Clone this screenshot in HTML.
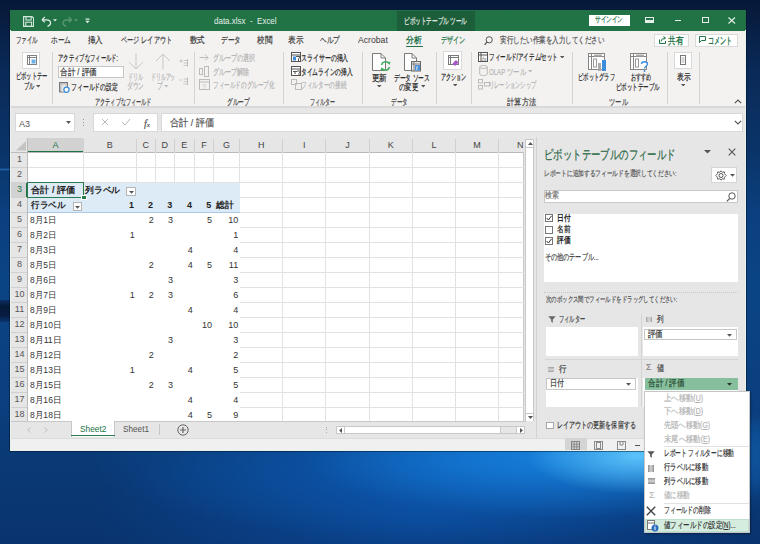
<!DOCTYPE html>
<html><head><meta charset="utf-8"><style>
html,body{margin:0;padding:0;width:760px;height:544px;overflow:hidden;}
body{position:relative;font-family:"Liberation Sans",sans-serif;background:#0a2d63;}
#d{position:absolute;left:0;top:0;width:760px;height:544px;overflow:hidden;}
#d div{position:absolute;white-space:nowrap;-webkit-text-stroke:0.2px currentColor;}
</style></head><body><div id="d">
<div style="left:0;top:0;width:760px;height:544px;background:radial-gradient(ellipse 110px 38px at 638px 456px, rgba(95,200,255,.95), rgba(95,200,255,0) 100%),radial-gradient(ellipse 260px 62px at 565px 456px, rgba(25,140,232,.8), rgba(25,140,232,0) 100%),radial-gradient(ellipse 380px 80px at 470px 462px, rgba(12,100,198,.75), rgba(12,100,198,0) 100%),radial-gradient(ellipse 330px 90px at 420px 515px, rgba(12,80,165,.7), rgba(12,80,165,0) 100%),linear-gradient(to bottom, #061838 0px, #0a2a58 70px, #0a3468 150px, #0b4080 220px, #0b4484 290px, #0b3f7e 400px, #0a3a76 455px, #09336e 544px);"></div>
<div style="left:0.00px;top:300.00px;width:10.00px;height:22.00px;background:linear-gradient(to bottom, #0a2d60, #061a3a 30%, #071d40 70%, #0a3570);"></div>
<div style="left:0.00px;top:168.00px;width:10.00px;height:3.00px;background:linear-gradient(to bottom, rgba(40,110,190,0), rgba(40,110,190,.8), rgba(40,110,190,0));"></div>
<div style="left:10.00px;top:10.00px;width:736.00px;height:441.00px;background:#f3f2f1;"></div>
<div style="left:10.00px;top:10.00px;width:736.00px;height:21.00px;background:#217346;"></div>
<div style="left:397.00px;top:11.00px;width:78.00px;height:20.00px;background:#1b5e39;"></div>
<div style="left:403.70px;top:15.67px;line-height:11.05px;font-size:8.5px;color:#e6efe9;transform:scaleX(0.6224);transform-origin:0 50%;--w:63.10px;">ピボットテーブル ツール</div>
<div style="left:214.20px;top:15.75px;line-height:11.7px;font-size:9px;color:#e6efe9;transform:scaleX(0.8875);transform-origin:0 50%;--w:62.60px;-webkit-text-stroke:0;">data.xlsx&nbsp;&nbsp;-&nbsp;&nbsp;Excel</div>
<div style="left:589.00px;top:15.00px;width:40.50px;height:11.00px;background:#fff;"></div>
<div style="left:595.00px;top:15.30px;line-height:10.4px;font-size:8px;color:#217346;transform:scaleX(0.7000);transform-origin:0 50%;--w:28.00px;">サインイン</div>
<svg style="position:absolute;left:22.8px;top:15.6px;" width="11.5" height="11" viewBox="0 0 11.5 11"><path d="M0.6 0.6 H9 L10.6 2.2 V10.4 H0.6Z" fill="none" stroke="#d3e6da" stroke-width="1.2"/><rect x="3" y="0.6" width="5.2" height="3.4" fill="none" stroke="#d3e6da" stroke-width="1.1"/><rect x="2.8" y="6.2" width="5.8" height="4.2" fill="none" stroke="#d3e6da" stroke-width="1.1"/></svg>
<svg style="position:absolute;left:40.5px;top:16px;" width="17" height="11" viewBox="0 0 17 11"><path d="M1 3.8 L3.8 1 M1 3.8 L3.8 6.2" fill="none" stroke="#e3eee7" stroke-width="1.2"/><path d="M1.2 3.8 H5.5 C8 3.8 9.6 5.3 9.6 7 C9.6 8.6 8.6 9.6 6.5 10.4" fill="none" stroke="#e3eee7" stroke-width="1.2"/><path d="M12 3.2 L16 3.2 L14 5.6Z" fill="#e3eee7"/></svg>
<svg style="position:absolute;left:61.5px;top:16px;" width="17" height="11" viewBox="0 0 17 11"><path d="M9.6 3.8 L6.8 1 M9.6 3.8 L6.8 6.2" fill="none" stroke="#5e9a76" stroke-width="1.2"/><path d="M9.4 3.8 H5.1 C2.6 3.8 1 5.3 1 7 C1 8.6 2 9.6 4.1 10.4" fill="none" stroke="#5e9a76" stroke-width="1.2"/><path d="M12 3.2 L16 3.2 L14 5.6Z" fill="#5e9a76"/></svg>
<svg style="position:absolute;left:85px;top:18px;" width="5" height="6" viewBox="0 0 5 6"><rect x="0.5" y="0.5" width="4" height="1.2" fill="#e3eee7"/><path d="M0.3 2.8 L4.7 2.8 L2.5 5.2Z" fill="#e3eee7"/></svg>
<svg style="position:absolute;left:645px;top:17px;" width="9" height="6" viewBox="0 0 9 6"><rect x="0.5" y="0.5" width="8" height="5" fill="none" stroke="#e6efe9"/><rect x="1" y="3" width="7" height="2.5" fill="#e6efe9"/><path d="M3 3 L4.5 1.5 L6 3Z" fill="#217346"/></svg>
<div style="left:674.50px;top:19.50px;width:6.00px;height:1.00px;background:#e6efe9;"></div>
<svg style="position:absolute;left:701.5px;top:17px;" width="7" height="6" viewBox="0 0 7 6"><rect x="0.5" y="0.5" width="6" height="5" fill="none" stroke="#e6efe9"/></svg>
<svg style="position:absolute;left:728.3px;top:16.6px;" width="7.5" height="7" viewBox="0 0 7.5 7"><path d="M0.5 0.5 L7 6.5 M7 0.5 L0.5 6.5" stroke="#e6efe9" stroke-width="1.15"/></svg>
<div style="left:15.50px;top:34.55px;line-height:11.7px;font-size:9px;color:#3b3b3b;transform:scaleX(0.6111);transform-origin:0 50%;--w:22.00px;">ファイル</div>
<div style="left:51.25px;top:34.55px;line-height:11.7px;font-size:9px;color:#3b3b3b;transform:scaleX(0.7407);transform-origin:0 50%;--w:20.00px;">ホーム</div>
<div style="left:88.00px;top:34.55px;line-height:11.7px;font-size:9px;color:#3b3b3b;transform:scaleX(0.8333);transform-origin:0 50%;--w:15.00px;">挿入</div>
<div style="left:120.75px;top:34.55px;line-height:11.7px;font-size:9px;color:#3b3b3b;transform:scaleX(0.6878);transform-origin:0 50%;--w:51.25px;">ページ レイアウト</div>
<div style="left:190.00px;top:34.55px;line-height:11.7px;font-size:9px;color:#3b3b3b;transform:scaleX(0.8333);transform-origin:0 50%;--w:15.00px;">数式</div>
<div style="left:220.80px;top:34.55px;line-height:11.7px;font-size:9px;color:#3b3b3b;transform:scaleX(0.7296);transform-origin:0 50%;--w:19.70px;">データ</div>
<div style="left:256.80px;top:34.55px;line-height:11.7px;font-size:9px;color:#3b3b3b;transform:scaleX(0.8444);transform-origin:0 50%;--w:15.20px;">校閲</div>
<div style="left:288.40px;top:34.55px;line-height:11.7px;font-size:9px;color:#3b3b3b;transform:scaleX(0.8500);transform-origin:0 50%;--w:15.30px;">表示</div>
<div style="left:319.50px;top:34.55px;line-height:11.7px;font-size:9px;color:#3b3b3b;transform:scaleX(0.7296);transform-origin:0 50%;--w:19.70px;">ヘルプ</div>
<div style="left:357.60px;top:34.55px;line-height:11.7px;font-size:9px;color:#3b3b3b;transform:scaleX(0.9603);transform-origin:0 50%;--w:29.80px;-webkit-text-stroke:0;">Acrobat</div>
<div style="left:406.30px;top:34.55px;line-height:11.7px;font-size:9px;color:#217346;transform:scaleX(0.8778);transform-origin:0 50%;--w:15.80px;font-weight:bold;-webkit-text-stroke:0;">分析</div>
<div style="left:406.40px;top:45.60px;width:16.20px;height:1.60px;background:#217346;"></div>
<div style="left:441.00px;top:34.55px;line-height:11.7px;font-size:9px;color:#217346;transform:scaleX(0.6806);transform-origin:0 50%;--w:24.50px;">デザイン</div>
<svg style="position:absolute;left:484px;top:36px;" width="9" height="10" viewBox="0 0 9 10"><circle cx="5.2" cy="3.8" r="3.1" fill="none" stroke="#555" stroke-width="1"/><path d="M3 6 L0.6 8.8" stroke="#555" stroke-width="1.2"/></svg>
<div style="left:499.70px;top:35.15px;line-height:11.7px;font-size:9px;color:#505050;transform:scaleX(0.7226);transform-origin:0 50%;--w:104.05px;">実行したい作業を入力してください</div>
<div style="left:653.75px;top:33.75px;width:35.00px;height:13.00px;background:#fff;border:1px solid #dadada;box-sizing:border-box;"></div>
<svg style="position:absolute;left:658.5px;top:35.5px;" width="7" height="8" viewBox="0 0 7 8"><path d="M0.5 3.5 L0.5 7.5 L6.5 7.5 L6.5 5" fill="none" stroke="#217346"/><path d="M2 5.5 C2.5 3 4 2 6 2 M4.5 0.5 L6.5 2 L4.5 3.5" fill="none" stroke="#217346"/></svg>
<div style="left:668.00px;top:35.23px;line-height:12.35px;font-size:9.5px;color:#217346;transform:scaleX(0.7625);transform-origin:0 50%;--w:15.25px;font-weight:bold;-webkit-text-stroke:0;">共有</div>
<div style="left:694.50px;top:33.75px;width:43.50px;height:13.00px;background:#fff;border:1px solid #dadada;box-sizing:border-box;"></div>
<svg style="position:absolute;left:699px;top:36px;" width="7" height="7" viewBox="0 0 7 7"><path d="M0.5 0.5 L6.5 0.5 L6.5 4.5 L2.5 4.5 L0.5 6.5Z" fill="none" stroke="#217346"/></svg>
<div style="left:708.25px;top:35.23px;line-height:12.35px;font-size:9.5px;color:#217346;transform:scaleX(0.6062);transform-origin:0 50%;--w:24.25px;font-weight:bold;-webkit-text-stroke:0;">コメント</div>
<div style="left:52.40px;top:52.00px;width:1.00px;height:52.00px;background:#d4d4d4;"></div>
<div style="left:194.20px;top:52.00px;width:1.00px;height:52.00px;background:#d4d4d4;"></div>
<div style="left:282.90px;top:52.00px;width:1.00px;height:52.00px;background:#d4d4d4;"></div>
<div style="left:361.80px;top:52.00px;width:1.00px;height:52.00px;background:#d4d4d4;"></div>
<div style="left:435.80px;top:52.00px;width:1.00px;height:52.00px;background:#d4d4d4;"></div>
<div style="left:471.40px;top:52.00px;width:1.00px;height:52.00px;background:#d4d4d4;"></div>
<div style="left:572.40px;top:52.00px;width:1.00px;height:52.00px;background:#d4d4d4;"></div>
<div style="left:667.00px;top:52.00px;width:1.00px;height:52.00px;background:#d4d4d4;"></div>
<div style="left:698.50px;top:52.00px;width:1.00px;height:52.00px;background:#d4d4d4;"></div>
<div style="left:95.20px;top:96.67px;line-height:11.05px;font-size:8.5px;color:#444;transform:scaleX(0.5697);transform-origin:0 50%;--w:56.40px;">アクティブなフィールド</div>
<div style="left:226.70px;top:96.67px;line-height:11.05px;font-size:8.5px;color:#444;transform:scaleX(0.6250);transform-origin:0 50%;--w:22.50px;">グループ</div>
<div style="left:309.70px;top:96.67px;line-height:11.05px;font-size:8.5px;color:#444;transform:scaleX(0.5622);transform-origin:0 50%;--w:25.30px;">フィルター</div>
<div style="left:390.80px;top:96.67px;line-height:11.05px;font-size:8.5px;color:#444;transform:scaleX(0.6148);transform-origin:0 50%;--w:16.60px;">データ</div>
<div style="left:507.00px;top:96.67px;line-height:11.05px;font-size:8.5px;color:#444;transform:scaleX(0.8056);transform-origin:0 50%;--w:29.00px;">計算方法</div>
<div style="left:609.40px;top:96.67px;line-height:11.05px;font-size:8.5px;color:#444;transform:scaleX(0.6963);transform-origin:0 50%;--w:18.80px;">ツール</div>
<svg style="position:absolute;left:734px;top:99px;" width="8" height="5" viewBox="0 0 8 5"><path d="M0.8 4.2 L4 1 L7.2 4.2" fill="none" stroke="#555" stroke-width="1.2"/></svg>
<div style="left:22.40px;top:51.60px;width:18.00px;height:17.00px;background:#fff;border:1px solid #d9d9d9;box-sizing:border-box;"></div>
<svg style="position:absolute;left:27px;top:55px;" width="10" height="10" viewBox="0 0 10 10"><rect x="0.5" y="0.5" width="9" height="9" fill="none" stroke="#808080"/><path d="M0.5 2.5 H9.5 M2.5 0.5 V9.5" stroke="#808080"/><rect x="4.5" y="4.5" width="4" height="4" fill="#6aaee8"/></svg>
<div style="left:15.50px;top:71.47px;line-height:11.05px;font-size:8.5px;color:#262626;transform:scaleX(0.5833);transform-origin:0 50%;--w:31.50px;">ピボットテー</div>
<div style="left:23.90px;top:80.97px;line-height:11.05px;font-size:8.5px;color:#262626;transform:scaleX(0.5889);transform-origin:0 50%;--w:10.60px;">ブル</div>
<svg style="position:absolute;left:35.75px;top:85.0px;" width="4.5" height="2.6" viewBox="0 0 4.5 2.6"><path d="M0 0 H4.5 L2.25 2.6Z" fill="#555"/></svg>
<div style="left:57.90px;top:53.38px;line-height:11.05px;font-size:8.5px;color:#262626;transform:scaleX(0.5919);transform-origin:0 50%;--w:60.00px;">アクティブなフィールド:</div>
<div style="left:57.60px;top:66.10px;width:66.10px;height:12.40px;background:#fff;border:1px solid #c6c6c6;box-sizing:border-box;"></div>
<div style="left:59.50px;top:67.05px;line-height:11.7px;font-size:9px;color:#333;transform:scaleX(0.8457);transform-origin:0 50%;--w:36.80px;">合計 / 評価</div>
<svg style="position:absolute;left:59.3px;top:81.5px;" width="12" height="11" viewBox="0 0 12 11"><rect x="0.5" y="0.5" width="8" height="9.5" fill="#bdbdbd" stroke="#7a7a7a"/><rect x="2.5" y="2.5" width="5" height="7" fill="#e8e8e8"/><circle cx="7.5" cy="7.8" r="2.6" fill="#fff" stroke="#3b8fd9" stroke-width="1.3"/></svg>
<div style="left:70.50px;top:82.07px;line-height:11.05px;font-size:8.5px;color:#262626;transform:scaleX(0.6514);transform-origin:0 50%;--w:46.90px;">フィールドの設定</div>
<svg style="position:absolute;left:128px;top:53px;" width="16" height="17" viewBox="0 0 16 17"><path d="M8 0.5 V16 M1 9 L8 16 L15 9" fill="none" stroke="#c8c8c8" stroke-width="1"/></svg>
<div style="left:128.40px;top:72.38px;line-height:11.05px;font-size:8.5px;color:#b4b4b4;transform:scaleX(0.5481);transform-origin:0 50%;--w:14.80px;">ドリル</div>
<div style="left:127.40px;top:81.17px;line-height:11.05px;font-size:8.5px;color:#b4b4b4;transform:scaleX(0.6222);transform-origin:0 50%;--w:16.80px;">ダウン</div>
<svg style="position:absolute;left:154.5px;top:53px;" width="16" height="17" viewBox="0 0 16 17"><path d="M8 16.5 V1 M1 8 L8 1 L15 8" fill="none" stroke="#c8c8c8" stroke-width="1"/></svg>
<div style="left:150.50px;top:72.38px;line-height:11.05px;font-size:8.5px;color:#b4b4b4;transform:scaleX(0.5378);transform-origin:0 50%;--w:24.20px;">ドリルアッ</div>
<div style="left:156.80px;top:81.17px;line-height:11.05px;font-size:8.5px;color:#b4b4b4;transform:scaleX(0.6333);transform-origin:0 50%;--w:5.70px;">プ</div>
<svg style="position:absolute;left:164.25px;top:85.2px;" width="4.5" height="2.6" viewBox="0 0 4.5 2.6"><path d="M0 0 H4.5 L2.25 2.6Z" fill="#bbb"/></svg>
<svg style="position:absolute;left:178.5px;top:58px;" width="10" height="28" viewBox="0 0 10 28"><path d="M0.5 3 H3.5 M2 1.5 V4.5" stroke="#bbb" stroke-width="0.9"/><path d="M4.5 2.5 H8.5 M4.5 5 H8.5 M4.5 7.5 H8.5" stroke="#c4c4c4" stroke-width="0.9"/><path d="M8.5 1 V8.5" stroke="#bbb" stroke-width="1"/><path d="M0.5 22 H3" stroke="#bbb" stroke-width="0.9"/><path d="M4.5 21 H8.5 M4.5 23.5 H8.5 M4.5 26 H8.5" stroke="#c4c4c4" stroke-width="0.9"/><path d="M8.5 19.5 V27" stroke="#bbb" stroke-width="1"/></svg>
<svg style="position:absolute;left:199px;top:53px;" width="11" height="9" viewBox="0 0 11 9"><path d="M0.5 4.5 H9 M6 1.5 L9 4.5 L6 7.5" fill="none" stroke="#bbb"/></svg>
<div style="left:212.50px;top:53.08px;line-height:11.05px;font-size:8.5px;color:#b4b4b4;transform:scaleX(0.6746);transform-origin:0 50%;--w:42.50px;">グループの選択</div>
<svg style="position:absolute;left:199px;top:66px;" width="11" height="11" viewBox="0 0 11 11"><rect x="0.5" y="2.5" width="3" height="6" fill="none" stroke="#bbb"/><rect x="5.5" y="0.5" width="4" height="10" fill="none" stroke="#bbb"/></svg>
<div style="left:212.50px;top:66.57px;line-height:11.05px;font-size:8.5px;color:#b4b4b4;transform:scaleX(0.6759);transform-origin:0 50%;--w:36.50px;">グループ解除</div>
<svg style="position:absolute;left:199px;top:79px;" width="11" height="11" viewBox="0 0 11 11"><rect x="0.5" y="0.5" width="10" height="10" fill="none" stroke="#bbb"/><path d="M0.5 3 H10.5" stroke="#bbb"/><text x="3" y="9.5" font-size="7" fill="#bbb" font-family="Liberation Sans">?</text></svg>
<div style="left:212.50px;top:80.27px;line-height:11.05px;font-size:8.5px;color:#b4b4b4;transform:scaleX(0.6212);transform-origin:0 50%;--w:61.50px;">フィールドのグループ化</div>
<svg style="position:absolute;left:290.5px;top:52px;" width="11" height="11" viewBox="0 0 11 11"><rect x="0.5" y="0.5" width="9" height="9" fill="#fff" stroke="#555"/><path d="M0.5 3 H9.5" stroke="#555"/><rect x="2" y="4.5" width="3" height="4" fill="#3d8ddd"/><path d="M5 4.5 L9 4.5 L7.5 7 V9.5" fill="none" stroke="#555"/></svg>
<div style="left:301.40px;top:53.08px;line-height:11.05px;font-size:8.5px;color:#222;transform:scaleX(0.6583);transform-origin:0 50%;--w:47.40px;">スライサーの挿入</div>
<svg style="position:absolute;left:290.5px;top:66px;" width="11" height="11" viewBox="0 0 11 11"><rect x="0.5" y="0.5" width="9" height="9" fill="#fff" stroke="#555"/><path d="M0.5 3 H9.5" stroke="#555"/><path d="M2 5.5 H6 M4 5.5 V8" stroke="#555"/><path d="M6 5 L9.5 5 L8 7.5 V10" fill="none" stroke="#555"/></svg>
<div style="left:301.40px;top:66.57px;line-height:11.05px;font-size:8.5px;color:#222;transform:scaleX(0.6370);transform-origin:0 50%;--w:51.60px;">タイムラインの挿入</div>
<svg style="position:absolute;left:290.5px;top:79px;" width="11" height="11" viewBox="0 0 11 11"><rect x="0.5" y="0.5" width="5" height="5" fill="none" stroke="#bbb"/><rect x="4.5" y="4.5" width="6" height="6" fill="none" stroke="#bbb"/></svg>
<div style="left:301.40px;top:80.27px;line-height:11.05px;font-size:8.5px;color:#b4b4b4;transform:scaleX(0.6319);transform-origin:0 50%;--w:45.50px;">フィルターの接続</div>
<svg style="position:absolute;left:372px;top:53px;" width="20" height="19" viewBox="0 0 20 19"><path d="M0.5 0.5 H9 L13.5 5 V17.5 H0.5Z" fill="#fff" stroke="#7a7a7a"/><path d="M9 0.5 V5 H13.5" fill="none" stroke="#7a7a7a"/><path d="M9.5 12 A4.2 4.2 0 0 1 17 10.5" fill="none" stroke="#3fae5f" stroke-width="1.6"/><path d="M17.5 14 A4.2 4.2 0 0 1 10 15.5" fill="none" stroke="#3fae5f" stroke-width="1.6"/><path d="M15.5 8.5 L18.5 9 L17.5 12Z" fill="#3fae5f"/><path d="M11.5 17.5 L8.5 17 L9.5 14Z" fill="#3fae5f"/></svg>
<div style="left:372.00px;top:73.17px;line-height:11.05px;font-size:8.5px;color:#262626;transform:scaleX(0.8333);transform-origin:0 50%;--w:15.00px;">更新</div>
<svg style="position:absolute;left:377.35px;top:84.7px;" width="4.5" height="2.6" viewBox="0 0 4.5 2.6"><path d="M0 0 H4.5 L2.25 2.6Z" fill="#555"/></svg>
<svg style="position:absolute;left:404px;top:53px;" width="18" height="19" viewBox="0 0 18 19"><path d="M0.5 0.5 H8 L12.5 5 V17.5 H0.5Z" fill="#fff" stroke="#7a7a7a"/><path d="M8 0.5 V5 H12.5" fill="none" stroke="#7a7a7a"/><rect x="7.5" y="8.5" width="9" height="9.5" fill="#e8e8e8" stroke="#666"/><path d="M7.5 11 H16.5 M10 8.5 V18" stroke="#666" stroke-width="0.8"/><rect x="11" y="12" width="5" height="5.5" fill="#4a90d9"/><path d="M13 13 V16 M13 16 L12 16.5" stroke="#fff" stroke-width="0.8"/></svg>
<div style="left:393.50px;top:73.27px;line-height:11.05px;font-size:8.5px;color:#262626;transform:scaleX(0.6386);transform-origin:0 50%;--w:36.00px;">データ ソース</div>
<div style="left:398.70px;top:81.97px;line-height:11.05px;font-size:8.5px;color:#262626;transform:scaleX(0.7148);transform-origin:0 50%;--w:19.30px;">の変更</div>
<svg style="position:absolute;left:420.55px;top:85.2px;" width="4.5" height="2.6" viewBox="0 0 4.5 2.6"><path d="M0 0 H4.5 L2.25 2.6Z" fill="#555"/></svg>
<div style="left:443.40px;top:51.40px;width:18.50px;height:18.20px;background:#fff;border:1px solid #d9d9d9;box-sizing:border-box;"></div>
<svg style="position:absolute;left:447.5px;top:55px;" width="11" height="11" viewBox="0 0 11 11"><rect x="0.5" y="0.5" width="10" height="9" fill="none" stroke="#7a7a7a"/><path d="M0.5 2.5 H10.5 M2.5 0.5 V9.5" stroke="#7a7a7a"/><path d="M4.5 8.5 L8 5 L10.5 7.5 L7 11Z" fill="#a855c8"/></svg>
<div style="left:440.60px;top:72.47px;line-height:11.05px;font-size:8.5px;color:#262626;transform:scaleX(0.5600);transform-origin:0 50%;--w:25.20px;">アクション</div>
<svg style="position:absolute;left:452.55px;top:83.8px;" width="4.5" height="2.6" viewBox="0 0 4.5 2.6"><path d="M0 0 H4.5 L2.25 2.6Z" fill="#555"/></svg>
<svg style="position:absolute;left:478px;top:52px;" width="11" height="11" viewBox="0 0 11 11"><rect x="0.5" y="0.5" width="9" height="9" fill="#fff" stroke="#555"/><path d="M0.5 3 H9.5 M3 0.5 V9.5" stroke="#555"/><text x="4" y="9" font-size="6" font-style="italic" fill="#555" font-family="Liberation Serif">fx</text></svg>
<div style="left:489.00px;top:52.27px;line-height:11.05px;font-size:8.5px;color:#222;transform:scaleX(0.6121);transform-origin:0 50%;--w:69.00px;">フィールド/アイテム/セット</div>
<svg style="position:absolute;left:559.75px;top:55.7px;" width="4.5" height="2.6" viewBox="0 0 4.5 2.6"><path d="M0 0 H4.5 L2.25 2.6Z" fill="#555"/></svg>
<svg style="position:absolute;left:479px;top:65px;" width="9" height="12" viewBox="0 0 9 12"><ellipse cx="4.5" cy="2" rx="3.8" ry="1.5" fill="none" stroke="#bbb"/><path d="M0.7 2 V9 C1 11 8 11 8.3 9 V2" fill="none" stroke="#bbb"/></svg>
<div style="left:489.00px;top:66.77px;line-height:11.05px;font-size:8.5px;color:#b4b4b4;transform:scaleX(0.7130);transform-origin:0 50%;--w:37.00px;">OLAP ツール</div>
<svg style="position:absolute;left:527.75px;top:70.2px;" width="4.5" height="2.6" viewBox="0 0 4.5 2.6"><path d="M0 0 H4.5 L2.25 2.6Z" fill="#bbb"/></svg>
<svg style="position:absolute;left:478px;top:79px;" width="12" height="11" viewBox="0 0 12 11"><rect x="0.5" y="0.5" width="4" height="3.5" fill="none" stroke="#bbb"/><rect x="6.5" y="3.5" width="5" height="3.5" fill="none" stroke="#bbb"/><rect x="0.5" y="6.5" width="4" height="3.5" fill="none" stroke="#bbb"/></svg>
<div style="left:489.00px;top:80.27px;line-height:11.05px;font-size:8.5px;color:#b4b4b4;transform:scaleX(0.5802);transform-origin:0 50%;--w:47.00px;">リレーションシップ</div>
<svg style="position:absolute;left:588px;top:53px;" width="20" height="18" viewBox="0 0 20 18"><rect x="0.5" y="0.5" width="16" height="16" fill="#fff" stroke="#858585"/><path d="M0.5 3.5 H16.5 M3.5 0.5 V16.5" stroke="#858585"/><rect x="6" y="1.5" width="8" height="2" fill="#aaa"/><rect x="5.5" y="6" width="3" height="8" fill="none" stroke="#999"/><rect x="10" y="10" width="3" height="8" fill="#aaa"/><rect x="14" y="7" width="4" height="11" fill="#3d8ddd"/></svg>
<div style="left:577.80px;top:72.27px;line-height:11.05px;font-size:8.5px;color:#262626;transform:scaleX(0.5857);transform-origin:0 50%;--w:36.90px;">ピボットグラフ</div>
<svg style="position:absolute;left:630.2px;top:53px;" width="20" height="19" viewBox="0 0 20 19"><rect x="0.5" y="0.5" width="16" height="16" fill="#fff" stroke="#858585"/><path d="M0.5 3.5 H16.5 M3.5 0.5 V16.5" stroke="#858585"/><rect x="6" y="1.5" width="8" height="2" fill="#aaa"/><rect x="5.5" y="6" width="3" height="8" fill="none" stroke="#999"/><path d="M11.5 11 C11.5 8 17.5 8 17.5 11 C17.5 13 14.5 13.5 14.5 15.5" fill="#fff" stroke="#3d8ddd" stroke-width="1.4"/><circle cx="14.5" cy="18" r="0.9" fill="#3d8ddd"/></svg>
<div style="left:630.60px;top:72.07px;line-height:11.05px;font-size:8.5px;color:#262626;transform:scaleX(0.5667);transform-origin:0 50%;--w:20.40px;">おすすめ</div>
<div style="left:616.00px;top:81.77px;line-height:11.05px;font-size:8.5px;color:#262626;transform:scaleX(0.6111);transform-origin:0 50%;--w:44.00px;">ピボットテーブル</div>
<div style="left:674.00px;top:51.50px;width:18.00px;height:17.30px;background:#fff;border:1px solid #d9d9d9;box-sizing:border-box;"></div>
<svg style="position:absolute;left:680px;top:55.4px;" width="6" height="10" viewBox="0 0 6 10"><rect x="0.5" y="0.5" width="5" height="9" fill="none" stroke="#777"/><path d="M1.5 3 H4.5 M1.5 5 H4.5 M1.5 7 H4.5" stroke="#999" stroke-width="0.8"/></svg>
<div style="left:676.50px;top:71.88px;line-height:11.05px;font-size:8.5px;color:#262626;transform:scaleX(0.7500);transform-origin:0 50%;--w:13.50px;">表示</div>
<svg style="position:absolute;left:680.75px;top:83.5px;" width="4.5" height="2.6" viewBox="0 0 4.5 2.6"><path d="M0 0 H4.5 L2.25 2.6Z" fill="#555"/></svg>
<div style="left:10.00px;top:107.00px;width:736.00px;height:31.00px;background:#e7e7e7;"></div>
<div style="left:10.00px;top:106.40px;width:736.00px;height:1.20px;background:#d9d9d9;"></div>
<div style="left:14.50px;top:113.30px;width:60.00px;height:18.30px;background:#fff;border:1px solid #d8d8d8;box-sizing:border-box;"></div>
<div style="left:18.50px;top:117.62px;line-height:12.35px;font-size:9.5px;color:#555;transform:scaleX(0.9462);transform-origin:0 50%;--w:11.00px;-webkit-text-stroke:0;">A3</div>
<svg style="position:absolute;left:66px;top:121px;" width="6" height="4" viewBox="0 0 6 4"><path d="M0 0 H5 L2.5 3Z" fill="#555"/></svg>
<div style="left:83.00px;top:118.50px;width:1.20px;height:1.20px;background:#999;"></div>
<div style="left:83.00px;top:121.50px;width:1.20px;height:1.20px;background:#999;"></div>
<div style="left:83.00px;top:124.50px;width:1.20px;height:1.20px;background:#999;"></div>
<div style="left:93.00px;top:113.30px;width:65.00px;height:18.30px;background:#fff;border:1px solid #d8d8d8;box-sizing:border-box;"></div>
<svg style="position:absolute;left:101px;top:118px;" width="8" height="8" viewBox="0 0 8 8"><path d="M1 1 L7 7 M7 1 L1 7" stroke="#bbb" stroke-width="1"/></svg>
<svg style="position:absolute;left:121px;top:118px;" width="10" height="8" viewBox="0 0 10 8"><path d="M1 4 L4 7 L9 1" fill="none" stroke="#bbb" stroke-width="1"/></svg>
<div style="left:144px;top:117px;font-family:'Liberation Serif',serif;font-style:italic;font-size:10px;line-height:13px;color:#555;">f<span style="font-size:7px">x</span></div>
<div style="left:161.00px;top:113.30px;width:581.50px;height:18.30px;background:#fff;border:1px solid #d8d8d8;box-sizing:border-box;"></div>
<div style="left:170.00px;top:116.53px;line-height:12.35px;font-size:9.5px;color:#555;transform:scaleX(0.9182);transform-origin:0 50%;--w:44.00px;">合計 / 評価</div>
<svg style="position:absolute;left:734px;top:120px;" width="8" height="5" viewBox="0 0 8 5"><path d="M0.8 0.8 L4 4 L7.2 0.8" fill="none" stroke="#555" stroke-width="1.2"/></svg>
<div style="left:11.00px;top:138.00px;width:513.00px;height:283.00px;background:#fff;"></div>
<div style="left:11.00px;top:138.00px;width:513.00px;height:14.20px;background:#e6e6e6;"></div>
<div style="left:11.00px;top:152.20px;width:17.00px;height:268.80px;background:#e6e6e6;"></div>
<svg style="position:absolute;left:16px;top:141px;" width="10" height="10" viewBox="0 0 10 10"><path d="M10 0 V9.6 H0Z" fill="#c4c4c4"/></svg>
<div style="left:28.00px;top:138.00px;width:55.00px;height:14.20px;background:#d2d2d2;"></div>
<div style="left:28.00px;top:151.10px;width:55.00px;height:1.70px;background:#217346;"></div>
<div style="left:11.00px;top:182.20px;width:16.00px;height:15.00px;background:#d2d2d2;"></div>
<div style="left:26.00px;top:182.20px;width:1.50px;height:15.00px;background:#217346;"></div>
<div style="left:55.50px;top:139.95px;line-height:11.7px;font-size:9px;color:#217346;transform:translateX(-50%);-webkit-text-stroke:0;">A</div>
<div style="left:109.65px;top:139.95px;line-height:11.7px;font-size:9px;color:#444;transform:translateX(-50%);-webkit-text-stroke:0;">B</div>
<div style="left:145.80px;top:139.95px;line-height:11.7px;font-size:9px;color:#444;transform:translateX(-50%);-webkit-text-stroke:0;">C</div>
<div style="left:164.85px;top:139.95px;line-height:11.7px;font-size:9px;color:#444;transform:translateX(-50%);-webkit-text-stroke:0;">D</div>
<div style="left:184.35px;top:139.95px;line-height:11.7px;font-size:9px;color:#444;transform:translateX(-50%);-webkit-text-stroke:0;">E</div>
<div style="left:203.90px;top:139.95px;line-height:11.7px;font-size:9px;color:#444;transform:translateX(-50%);-webkit-text-stroke:0;">F</div>
<div style="left:226.60px;top:139.95px;line-height:11.7px;font-size:9px;color:#444;transform:translateX(-50%);-webkit-text-stroke:0;">G</div>
<div style="left:261.15px;top:139.95px;line-height:11.7px;font-size:9px;color:#444;transform:translateX(-50%);-webkit-text-stroke:0;">H</div>
<div style="left:304.15px;top:139.95px;line-height:11.7px;font-size:9px;color:#444;transform:translateX(-50%);-webkit-text-stroke:0;">I</div>
<div style="left:347.55px;top:139.95px;line-height:11.7px;font-size:9px;color:#444;transform:translateX(-50%);-webkit-text-stroke:0;">J</div>
<div style="left:390.80px;top:139.95px;line-height:11.7px;font-size:9px;color:#444;transform:translateX(-50%);-webkit-text-stroke:0;">K</div>
<div style="left:433.95px;top:139.95px;line-height:11.7px;font-size:9px;color:#444;transform:translateX(-50%);-webkit-text-stroke:0;">L</div>
<div style="left:477.05px;top:139.95px;line-height:11.7px;font-size:9px;color:#444;transform:translateX(-50%);-webkit-text-stroke:0;">M</div>
<div style="left:520.30px;top:139.95px;line-height:11.7px;font-size:9px;color:#444;transform:translateX(-50%);-webkit-text-stroke:0;">N</div>
<div style="left:82.60px;top:139.00px;width:1.00px;height:13.20px;background:#d0d0d0;"></div>
<div style="left:135.90px;top:139.00px;width:1.00px;height:13.20px;background:#d0d0d0;"></div>
<div style="left:154.90px;top:139.00px;width:1.00px;height:13.20px;background:#d0d0d0;"></div>
<div style="left:174.00px;top:139.00px;width:1.00px;height:13.20px;background:#d0d0d0;"></div>
<div style="left:193.90px;top:139.00px;width:1.00px;height:13.20px;background:#d0d0d0;"></div>
<div style="left:213.10px;top:139.00px;width:1.00px;height:13.20px;background:#d0d0d0;"></div>
<div style="left:239.30px;top:139.00px;width:1.00px;height:13.20px;background:#d0d0d0;"></div>
<div style="left:282.20px;top:139.00px;width:1.00px;height:13.20px;background:#d0d0d0;"></div>
<div style="left:325.30px;top:139.00px;width:1.00px;height:13.20px;background:#d0d0d0;"></div>
<div style="left:369.00px;top:139.00px;width:1.00px;height:13.20px;background:#d0d0d0;"></div>
<div style="left:411.80px;top:139.00px;width:1.00px;height:13.20px;background:#d0d0d0;"></div>
<div style="left:455.30px;top:139.00px;width:1.00px;height:13.20px;background:#d0d0d0;"></div>
<div style="left:498.00px;top:139.00px;width:1.00px;height:13.20px;background:#d0d0d0;"></div>
<div style="left:11.00px;top:151.90px;width:512.40px;height:1.00px;background:#bababa;"></div>
<div style="left:523.00px;top:152.20px;width:1.00px;height:268.80px;background:#c8c8c8;"></div>
<div style="left:27.00px;top:138.00px;width:1.00px;height:283.00px;background:#bababa;"></div>
<div style="left:11.00px;top:166.80px;width:16.00px;height:1.00px;background:#d0d0d0;"></div>
<div style="left:19.50px;top:154.15px;line-height:11.7px;font-size:9px;color:#555;transform:translateX(-50%);-webkit-text-stroke:0;">1</div>
<div style="left:11.00px;top:181.80px;width:16.00px;height:1.00px;background:#d0d0d0;"></div>
<div style="left:19.50px;top:169.15px;line-height:11.7px;font-size:9px;color:#555;transform:translateX(-50%);-webkit-text-stroke:0;">2</div>
<div style="left:11.00px;top:196.80px;width:16.00px;height:1.00px;background:#d0d0d0;"></div>
<div style="left:19.50px;top:184.15px;line-height:11.7px;font-size:9px;color:#217346;transform:translateX(-50%);-webkit-text-stroke:0;">3</div>
<div style="left:11.00px;top:211.80px;width:16.00px;height:1.00px;background:#d0d0d0;"></div>
<div style="left:19.50px;top:199.15px;line-height:11.7px;font-size:9px;color:#555;transform:translateX(-50%);-webkit-text-stroke:0;">4</div>
<div style="left:11.00px;top:226.80px;width:16.00px;height:1.00px;background:#d0d0d0;"></div>
<div style="left:19.50px;top:214.15px;line-height:11.7px;font-size:9px;color:#555;transform:translateX(-50%);-webkit-text-stroke:0;">5</div>
<div style="left:11.00px;top:241.80px;width:16.00px;height:1.00px;background:#d0d0d0;"></div>
<div style="left:19.50px;top:229.15px;line-height:11.7px;font-size:9px;color:#555;transform:translateX(-50%);-webkit-text-stroke:0;">6</div>
<div style="left:11.00px;top:256.80px;width:16.00px;height:1.00px;background:#d0d0d0;"></div>
<div style="left:19.50px;top:244.15px;line-height:11.7px;font-size:9px;color:#555;transform:translateX(-50%);-webkit-text-stroke:0;">7</div>
<div style="left:11.00px;top:271.80px;width:16.00px;height:1.00px;background:#d0d0d0;"></div>
<div style="left:19.50px;top:259.15px;line-height:11.7px;font-size:9px;color:#555;transform:translateX(-50%);-webkit-text-stroke:0;">8</div>
<div style="left:11.00px;top:286.80px;width:16.00px;height:1.00px;background:#d0d0d0;"></div>
<div style="left:19.50px;top:274.15px;line-height:11.7px;font-size:9px;color:#555;transform:translateX(-50%);-webkit-text-stroke:0;">9</div>
<div style="left:11.00px;top:301.80px;width:16.00px;height:1.00px;background:#d0d0d0;"></div>
<div style="left:19.50px;top:289.15px;line-height:11.7px;font-size:9px;color:#555;transform:translateX(-50%);-webkit-text-stroke:0;">10</div>
<div style="left:11.00px;top:316.80px;width:16.00px;height:1.00px;background:#d0d0d0;"></div>
<div style="left:19.50px;top:304.15px;line-height:11.7px;font-size:9px;color:#555;transform:translateX(-50%);-webkit-text-stroke:0;">11</div>
<div style="left:11.00px;top:331.80px;width:16.00px;height:1.00px;background:#d0d0d0;"></div>
<div style="left:19.50px;top:319.15px;line-height:11.7px;font-size:9px;color:#555;transform:translateX(-50%);-webkit-text-stroke:0;">12</div>
<div style="left:11.00px;top:346.80px;width:16.00px;height:1.00px;background:#d0d0d0;"></div>
<div style="left:19.50px;top:334.15px;line-height:11.7px;font-size:9px;color:#555;transform:translateX(-50%);-webkit-text-stroke:0;">13</div>
<div style="left:11.00px;top:361.80px;width:16.00px;height:1.00px;background:#d0d0d0;"></div>
<div style="left:19.50px;top:349.15px;line-height:11.7px;font-size:9px;color:#555;transform:translateX(-50%);-webkit-text-stroke:0;">14</div>
<div style="left:11.00px;top:376.80px;width:16.00px;height:1.00px;background:#d0d0d0;"></div>
<div style="left:19.50px;top:364.15px;line-height:11.7px;font-size:9px;color:#555;transform:translateX(-50%);-webkit-text-stroke:0;">15</div>
<div style="left:11.00px;top:391.80px;width:16.00px;height:1.00px;background:#d0d0d0;"></div>
<div style="left:19.50px;top:379.15px;line-height:11.7px;font-size:9px;color:#555;transform:translateX(-50%);-webkit-text-stroke:0;">16</div>
<div style="left:11.00px;top:406.80px;width:16.00px;height:1.00px;background:#d0d0d0;"></div>
<div style="left:19.50px;top:394.15px;line-height:11.7px;font-size:9px;color:#555;transform:translateX(-50%);-webkit-text-stroke:0;">17</div>
<div style="left:11.00px;top:421.80px;width:16.00px;height:1.00px;background:#d0d0d0;"></div>
<div style="left:19.50px;top:409.15px;line-height:11.7px;font-size:9px;color:#555;transform:translateX(-50%);-webkit-text-stroke:0;">18</div>
<div style="left:28.00px;top:166.80px;width:496.00px;height:1.00px;background:#e2e2e2;"></div>
<div style="left:28.00px;top:181.80px;width:496.00px;height:1.00px;background:#e2e2e2;"></div>
<div style="left:239.70px;top:196.80px;width:284.30px;height:1.00px;background:#e2e2e2;"></div>
<div style="left:239.70px;top:211.80px;width:284.30px;height:1.00px;background:#e2e2e2;"></div>
<div style="left:239.70px;top:226.80px;width:284.30px;height:1.00px;background:#e2e2e2;"></div>
<div style="left:239.70px;top:241.80px;width:284.30px;height:1.00px;background:#e2e2e2;"></div>
<div style="left:239.70px;top:256.80px;width:284.30px;height:1.00px;background:#e2e2e2;"></div>
<div style="left:239.70px;top:271.80px;width:284.30px;height:1.00px;background:#e2e2e2;"></div>
<div style="left:239.70px;top:286.80px;width:284.30px;height:1.00px;background:#e2e2e2;"></div>
<div style="left:239.70px;top:301.80px;width:284.30px;height:1.00px;background:#e2e2e2;"></div>
<div style="left:239.70px;top:316.80px;width:284.30px;height:1.00px;background:#e2e2e2;"></div>
<div style="left:239.70px;top:331.80px;width:284.30px;height:1.00px;background:#e2e2e2;"></div>
<div style="left:239.70px;top:346.80px;width:284.30px;height:1.00px;background:#e2e2e2;"></div>
<div style="left:239.70px;top:361.80px;width:284.30px;height:1.00px;background:#e2e2e2;"></div>
<div style="left:239.70px;top:376.80px;width:284.30px;height:1.00px;background:#e2e2e2;"></div>
<div style="left:239.70px;top:391.80px;width:284.30px;height:1.00px;background:#e2e2e2;"></div>
<div style="left:239.70px;top:406.80px;width:284.30px;height:1.00px;background:#e2e2e2;"></div>
<div style="left:239.70px;top:421.80px;width:284.30px;height:1.00px;background:#e2e2e2;"></div>
<div style="left:82.60px;top:152.20px;width:1.00px;height:30.00px;background:#e2e2e2;"></div>
<div style="left:135.90px;top:152.20px;width:1.00px;height:30.00px;background:#e2e2e2;"></div>
<div style="left:154.90px;top:152.20px;width:1.00px;height:30.00px;background:#e2e2e2;"></div>
<div style="left:174.00px;top:152.20px;width:1.00px;height:30.00px;background:#e2e2e2;"></div>
<div style="left:193.90px;top:152.20px;width:1.00px;height:30.00px;background:#e2e2e2;"></div>
<div style="left:213.10px;top:152.20px;width:1.00px;height:30.00px;background:#e2e2e2;"></div>
<div style="left:239.30px;top:152.20px;width:1.00px;height:30.00px;background:#e2e2e2;"></div>
<div style="left:282.20px;top:152.20px;width:1.00px;height:268.80px;background:#e2e2e2;"></div>
<div style="left:325.30px;top:152.20px;width:1.00px;height:268.80px;background:#e2e2e2;"></div>
<div style="left:369.00px;top:152.20px;width:1.00px;height:268.80px;background:#e2e2e2;"></div>
<div style="left:411.80px;top:152.20px;width:1.00px;height:268.80px;background:#e2e2e2;"></div>
<div style="left:455.30px;top:152.20px;width:1.00px;height:268.80px;background:#e2e2e2;"></div>
<div style="left:498.00px;top:152.20px;width:1.00px;height:268.80px;background:#e2e2e2;"></div>
<div style="left:28.00px;top:182.80px;width:211.70px;height:29.00px;background:#ddebf7;"></div>
<div style="left:28.00px;top:211.80px;width:211.70px;height:1.00px;background:#a9c8ea;"></div>
<div style="left:27.10px;top:181.80px;width:56.50px;height:16.30px;border:1.6px solid #2a7a4e;box-sizing:border-box;"></div>
<div style="left:82.00px;top:195.60px;width:3.60px;height:3.60px;background:#2a7a4e;outline:1px solid #fff;"></div>
<div style="left:31.00px;top:184.65px;line-height:11.7px;font-size:9px;color:#222;transform:scaleX(1.0226);transform-origin:0 50%;--w:44.50px;font-weight:bold;-webkit-text-stroke:0;">合計 / 評価</div>
<div style="left:84.90px;top:184.65px;line-height:11.7px;font-size:9px;color:#222;transform:scaleX(0.9750);transform-origin:0 50%;--w:35.10px;font-weight:bold;-webkit-text-stroke:0;">列ラベル</div>
<div style="left:126.30px;top:187.20px;width:10.00px;height:9.20px;background:#fff;border:1px solid #b5b5b5;box-sizing:border-box;"></div>
<svg style="position:absolute;left:129px;top:191px;" width="5" height="3" viewBox="0 0 5 3"><path d="M0 0 H5 L2.5 2.8Z" fill="#555"/></svg>
<div style="left:31.00px;top:199.65px;line-height:11.7px;font-size:9px;color:#222;transform:scaleX(0.9528);transform-origin:0 50%;--w:34.30px;font-weight:bold;-webkit-text-stroke:0;">行ラベル</div>
<div style="left:72.80px;top:201.70px;width:9.60px;height:9.00px;background:#fff;border:1px solid #b5b5b5;box-sizing:border-box;"></div>
<svg style="position:absolute;left:75.3px;top:205.5px;" width="5" height="3" viewBox="0 0 5 3"><path d="M0 0 H5 L2.5 2.8Z" fill="#555"/></svg>
<div style="left:134.10px;top:199.65px;line-height:11.7px;font-size:9px;color:#222;transform:translateX(-100%);font-weight:bold;-webkit-text-stroke:0;">1</div>
<div style="left:153.10px;top:199.65px;line-height:11.7px;font-size:9px;color:#222;transform:translateX(-100%);font-weight:bold;-webkit-text-stroke:0;">2</div>
<div style="left:172.20px;top:199.65px;line-height:11.7px;font-size:9px;color:#222;transform:translateX(-100%);font-weight:bold;-webkit-text-stroke:0;">3</div>
<div style="left:192.10px;top:199.65px;line-height:11.7px;font-size:9px;color:#222;transform:translateX(-100%);font-weight:bold;-webkit-text-stroke:0;">4</div>
<div style="left:211.30px;top:199.65px;line-height:11.7px;font-size:9px;color:#222;transform:translateX(-100%);font-weight:bold;-webkit-text-stroke:0;">5</div>
<div style="left:215.50px;top:199.65px;line-height:11.7px;font-size:9px;color:#222;transform:scaleX(1.0000);transform-origin:0 50%;--w:18.00px;font-weight:bold;-webkit-text-stroke:0;">総計</div>
<div style="left:29.90px;top:214.55px;line-height:11.7px;font-size:9px;color:#333;transform:scaleX(0.9388);transform-origin:0 50%;--w:26.30px;-webkit-text-stroke:0;">8月1日</div>
<div style="left:153.80px;top:214.55px;line-height:11.7px;font-size:9px;color:#333;transform:translateX(-100%);-webkit-text-stroke:0;">2</div>
<div style="left:172.90px;top:214.55px;line-height:11.7px;font-size:9px;color:#333;transform:translateX(-100%);-webkit-text-stroke:0;">3</div>
<div style="left:212.00px;top:214.55px;line-height:11.7px;font-size:9px;color:#333;transform:translateX(-100%);-webkit-text-stroke:0;">5</div>
<div style="left:238.20px;top:214.55px;line-height:11.7px;font-size:9px;color:#333;transform:translateX(-100%);-webkit-text-stroke:0;">10</div>
<div style="left:29.90px;top:229.55px;line-height:11.7px;font-size:9px;color:#333;transform:scaleX(0.9388);transform-origin:0 50%;--w:26.30px;-webkit-text-stroke:0;">8月2日</div>
<div style="left:134.80px;top:229.55px;line-height:11.7px;font-size:9px;color:#333;transform:translateX(-100%);-webkit-text-stroke:0;">1</div>
<div style="left:238.20px;top:229.55px;line-height:11.7px;font-size:9px;color:#333;transform:translateX(-100%);-webkit-text-stroke:0;">1</div>
<div style="left:29.90px;top:244.55px;line-height:11.7px;font-size:9px;color:#333;transform:scaleX(0.9388);transform-origin:0 50%;--w:26.30px;-webkit-text-stroke:0;">8月3日</div>
<div style="left:192.80px;top:244.55px;line-height:11.7px;font-size:9px;color:#333;transform:translateX(-100%);-webkit-text-stroke:0;">4</div>
<div style="left:238.20px;top:244.55px;line-height:11.7px;font-size:9px;color:#333;transform:translateX(-100%);-webkit-text-stroke:0;">4</div>
<div style="left:29.90px;top:259.55px;line-height:11.7px;font-size:9px;color:#333;transform:scaleX(0.9388);transform-origin:0 50%;--w:26.30px;-webkit-text-stroke:0;">8月5日</div>
<div style="left:153.80px;top:259.55px;line-height:11.7px;font-size:9px;color:#333;transform:translateX(-100%);-webkit-text-stroke:0;">2</div>
<div style="left:192.80px;top:259.55px;line-height:11.7px;font-size:9px;color:#333;transform:translateX(-100%);-webkit-text-stroke:0;">4</div>
<div style="left:212.00px;top:259.55px;line-height:11.7px;font-size:9px;color:#333;transform:translateX(-100%);-webkit-text-stroke:0;">5</div>
<div style="left:238.20px;top:259.55px;line-height:11.7px;font-size:9px;color:#333;transform:translateX(-100%);-webkit-text-stroke:0;">11</div>
<div style="left:29.90px;top:274.55px;line-height:11.7px;font-size:9px;color:#333;transform:scaleX(0.9388);transform-origin:0 50%;--w:26.30px;-webkit-text-stroke:0;">8月6日</div>
<div style="left:172.90px;top:274.55px;line-height:11.7px;font-size:9px;color:#333;transform:translateX(-100%);-webkit-text-stroke:0;">3</div>
<div style="left:238.20px;top:274.55px;line-height:11.7px;font-size:9px;color:#333;transform:translateX(-100%);-webkit-text-stroke:0;">3</div>
<div style="left:29.90px;top:289.55px;line-height:11.7px;font-size:9px;color:#333;transform:scaleX(0.9388);transform-origin:0 50%;--w:26.30px;-webkit-text-stroke:0;">8月7日</div>
<div style="left:134.80px;top:289.55px;line-height:11.7px;font-size:9px;color:#333;transform:translateX(-100%);-webkit-text-stroke:0;">1</div>
<div style="left:153.80px;top:289.55px;line-height:11.7px;font-size:9px;color:#333;transform:translateX(-100%);-webkit-text-stroke:0;">2</div>
<div style="left:172.90px;top:289.55px;line-height:11.7px;font-size:9px;color:#333;transform:translateX(-100%);-webkit-text-stroke:0;">3</div>
<div style="left:238.20px;top:289.55px;line-height:11.7px;font-size:9px;color:#333;transform:translateX(-100%);-webkit-text-stroke:0;">6</div>
<div style="left:29.90px;top:304.55px;line-height:11.7px;font-size:9px;color:#333;transform:scaleX(0.9388);transform-origin:0 50%;--w:26.30px;-webkit-text-stroke:0;">8月9日</div>
<div style="left:192.80px;top:304.55px;line-height:11.7px;font-size:9px;color:#333;transform:translateX(-100%);-webkit-text-stroke:0;">4</div>
<div style="left:238.20px;top:304.55px;line-height:11.7px;font-size:9px;color:#333;transform:translateX(-100%);-webkit-text-stroke:0;">4</div>
<div style="left:29.90px;top:319.55px;line-height:11.7px;font-size:9px;color:#333;transform:scaleX(0.9536);transform-origin:0 50%;--w:31.50px;-webkit-text-stroke:0;">8月10日</div>
<div style="left:212.00px;top:319.55px;line-height:11.7px;font-size:9px;color:#333;transform:translateX(-100%);-webkit-text-stroke:0;">10</div>
<div style="left:238.20px;top:319.55px;line-height:11.7px;font-size:9px;color:#333;transform:translateX(-100%);-webkit-text-stroke:0;">10</div>
<div style="left:29.90px;top:334.55px;line-height:11.7px;font-size:9px;color:#333;transform:scaleX(0.9734);transform-origin:0 50%;--w:31.50px;-webkit-text-stroke:0;">8月11日</div>
<div style="left:172.90px;top:334.55px;line-height:11.7px;font-size:9px;color:#333;transform:translateX(-100%);-webkit-text-stroke:0;">3</div>
<div style="left:238.20px;top:334.55px;line-height:11.7px;font-size:9px;color:#333;transform:translateX(-100%);-webkit-text-stroke:0;">3</div>
<div style="left:29.90px;top:349.55px;line-height:11.7px;font-size:9px;color:#333;transform:scaleX(0.9536);transform-origin:0 50%;--w:31.50px;-webkit-text-stroke:0;">8月12日</div>
<div style="left:153.80px;top:349.55px;line-height:11.7px;font-size:9px;color:#333;transform:translateX(-100%);-webkit-text-stroke:0;">2</div>
<div style="left:238.20px;top:349.55px;line-height:11.7px;font-size:9px;color:#333;transform:translateX(-100%);-webkit-text-stroke:0;">2</div>
<div style="left:29.90px;top:364.55px;line-height:11.7px;font-size:9px;color:#333;transform:scaleX(0.9536);transform-origin:0 50%;--w:31.50px;-webkit-text-stroke:0;">8月13日</div>
<div style="left:134.80px;top:364.55px;line-height:11.7px;font-size:9px;color:#333;transform:translateX(-100%);-webkit-text-stroke:0;">1</div>
<div style="left:192.80px;top:364.55px;line-height:11.7px;font-size:9px;color:#333;transform:translateX(-100%);-webkit-text-stroke:0;">4</div>
<div style="left:238.20px;top:364.55px;line-height:11.7px;font-size:9px;color:#333;transform:translateX(-100%);-webkit-text-stroke:0;">5</div>
<div style="left:29.90px;top:379.55px;line-height:11.7px;font-size:9px;color:#333;transform:scaleX(0.9536);transform-origin:0 50%;--w:31.50px;-webkit-text-stroke:0;">8月15日</div>
<div style="left:153.80px;top:379.55px;line-height:11.7px;font-size:9px;color:#333;transform:translateX(-100%);-webkit-text-stroke:0;">2</div>
<div style="left:172.90px;top:379.55px;line-height:11.7px;font-size:9px;color:#333;transform:translateX(-100%);-webkit-text-stroke:0;">3</div>
<div style="left:238.20px;top:379.55px;line-height:11.7px;font-size:9px;color:#333;transform:translateX(-100%);-webkit-text-stroke:0;">5</div>
<div style="left:29.90px;top:394.55px;line-height:11.7px;font-size:9px;color:#333;transform:scaleX(0.9536);transform-origin:0 50%;--w:31.50px;-webkit-text-stroke:0;">8月16日</div>
<div style="left:192.80px;top:394.55px;line-height:11.7px;font-size:9px;color:#333;transform:translateX(-100%);-webkit-text-stroke:0;">4</div>
<div style="left:238.20px;top:394.55px;line-height:11.7px;font-size:9px;color:#333;transform:translateX(-100%);-webkit-text-stroke:0;">4</div>
<div style="left:29.90px;top:409.55px;line-height:11.7px;font-size:9px;color:#333;transform:scaleX(0.9536);transform-origin:0 50%;--w:31.50px;-webkit-text-stroke:0;">8月18日</div>
<div style="left:192.80px;top:409.55px;line-height:11.7px;font-size:9px;color:#333;transform:translateX(-100%);-webkit-text-stroke:0;">4</div>
<div style="left:212.00px;top:409.55px;line-height:11.7px;font-size:9px;color:#333;transform:translateX(-100%);-webkit-text-stroke:0;">5</div>
<div style="left:238.20px;top:409.55px;line-height:11.7px;font-size:9px;color:#333;transform:translateX(-100%);-webkit-text-stroke:0;">9</div>
<div style="left:524.00px;top:138.00px;width:12.00px;height:283.00px;background:#e6e6e6;"></div>
<div style="left:525.20px;top:139.30px;width:9.00px;height:282.00px;background:#fff;border:1px solid #c8c8c8;box-sizing:border-box;"></div>
<div style="left:525.20px;top:139.30px;width:9.00px;height:9.00px;background:#fff;border:1px solid #c8c8c8;box-sizing:border-box;"></div>
<svg style="position:absolute;left:527.5px;top:142px;" width="5" height="3" viewBox="0 0 5 3"><path d="M0 3 H5 L2.5 0Z" fill="#555"/></svg>
<div style="left:525.20px;top:412.50px;width:9.00px;height:9.00px;background:#fff;border:1px solid #c8c8c8;box-sizing:border-box;"></div>
<svg style="position:absolute;left:527.5px;top:415.5px;" width="5" height="3" viewBox="0 0 5 3"><path d="M0 0 H5 L2.5 3Z" fill="#555"/></svg>
<div style="left:10.00px;top:421.00px;width:526.00px;height:17.20px;background:#e6e6e6;"></div>
<div style="left:10.00px;top:421.00px;width:516.00px;height:1.00px;background:#c8c8c8;"></div>
<svg style="position:absolute;left:27px;top:427px;" width="4" height="6" viewBox="0 0 4 6"><path d="M3.5 0.5 L0.8 3 L3.5 5.5" fill="none" stroke="#c0c0c0"/></svg>
<svg style="position:absolute;left:44px;top:427px;" width="4" height="6" viewBox="0 0 4 6"><path d="M0.5 0.5 L3.2 3 L0.5 5.5" fill="none" stroke="#c0c0c0"/></svg>
<div style="left:71.40px;top:421.00px;width:43.80px;height:16.00px;background:#fff;border-left:1px solid #c8c8c8;border-right:1px solid #c8c8c8;box-sizing:border-box;"></div>
<div style="left:71.40px;top:434.80px;width:43.80px;height:1.40px;background:#2a7a4e;"></div>
<div style="left:80.00px;top:424.25px;line-height:11.7px;font-size:9px;color:#217346;transform:scaleX(0.9288);transform-origin:0 50%;--w:26.50px;-webkit-text-stroke:0;">Sheet2</div>
<div style="left:123.00px;top:424.25px;line-height:11.7px;font-size:9px;color:#555;transform:scaleX(0.9113);transform-origin:0 50%;--w:26.00px;-webkit-text-stroke:0;">Sheet1</div>
<div style="left:158.50px;top:424.00px;width:1.00px;height:11.00px;background:#c6c6c6;"></div>
<svg style="position:absolute;left:177px;top:423.5px;" width="12" height="12" viewBox="0 0 12 12"><circle cx="6" cy="6" r="5.2" fill="none" stroke="#666" stroke-width="1"/><path d="M6 3 V9 M3 6 H9" stroke="#666" stroke-width="1.2"/></svg>
<div style="left:326.00px;top:426.50px;width:1.00px;height:1.00px;background:#aaa;"></div>
<div style="left:326.00px;top:429.00px;width:1.00px;height:1.00px;background:#aaa;"></div>
<div style="left:326.00px;top:431.50px;width:1.00px;height:1.00px;background:#aaa;"></div>
<div style="left:336.00px;top:425.70px;width:189.00px;height:8.50px;background:#e6e6e6;border:1px solid #c8c8c8;box-sizing:border-box;"></div>
<div style="left:336.00px;top:425.70px;width:9.00px;height:8.50px;background:#fff;border:1px solid #c8c8c8;box-sizing:border-box;"></div>
<svg style="position:absolute;left:339px;top:428px;" width="3" height="5" viewBox="0 0 3 5"><path d="M3 0 V5 L0 2.5Z" fill="#555"/></svg>
<div style="left:344.00px;top:425.70px;width:157.00px;height:8.50px;background:#fff;border:1px solid #c8c8c8;box-sizing:border-box;"></div>
<div style="left:516.00px;top:425.70px;width:9.00px;height:8.50px;background:#fff;border:1px solid #c8c8c8;box-sizing:border-box;"></div>
<svg style="position:absolute;left:519.5px;top:428px;" width="3" height="5" viewBox="0 0 3 5"><path d="M0 0 V5 L3 2.5Z" fill="#555"/></svg>
<div style="left:10.00px;top:438.20px;width:736.00px;height:12.80px;background:#f0f0f0;border-top:1px solid #dcdcdc;box-sizing:border-box;"></div>
<div style="left:564.50px;top:438.20px;width:22.00px;height:12.60px;background:#d4d4d4;"></div>
<svg style="position:absolute;left:570.5px;top:440.5px;" width="9" height="9" viewBox="0 0 9 9"><rect x="0.5" y="0.5" width="8" height="8" fill="none" stroke="#858585"/><path d="M0.5 3.2 H8.5 M0.5 5.8 H8.5 M3.2 0.5 V8.5 M5.8 0.5 V8.5" stroke="#858585" stroke-width="0.9"/></svg>
<svg style="position:absolute;left:593.5px;top:440.5px;" width="9" height="9" viewBox="0 0 9 9"><rect x="0.5" y="0.5" width="8" height="8" fill="none" stroke="#8a8a8a"/><rect x="2.5" y="1.5" width="4" height="6" fill="none" stroke="#8a8a8a"/></svg>
<svg style="position:absolute;left:616.5px;top:440.5px;" width="9" height="9" viewBox="0 0 9 9"><rect x="0.5" y="0.5" width="8" height="8" fill="none" stroke="#8a8a8a"/><path d="M3 0.5 V4 H6 V0.5" fill="none" stroke="#8a8a8a"/></svg>
<div style="left:634.50px;top:444.50px;width:5.00px;height:1.00px;background:#555;"></div>
<div style="left:536.00px;top:137.00px;width:210.00px;height:301.20px;background:#e6e6e6;border-left:1px solid #d2d2d2;box-sizing:border-box;"></div>
<div style="left:543.90px;top:146.55px;line-height:16.9px;font-size:13px;color:#2c6a48;transform:scaleX(0.7231);transform-origin:0 50%;--w:131.60px;-webkit-text-stroke:0.25px #2c6a48;">ピボットテーブルのフィールド</div>
<svg style="position:absolute;left:704px;top:149.5px;" width="7" height="4" viewBox="0 0 7 4"><path d="M0 0 H7 L3.5 3.5Z" fill="#555"/></svg>
<svg style="position:absolute;left:727.5px;top:147.5px;" width="8" height="8" viewBox="0 0 8 8"><path d="M0.7 0.7 L7.3 7.3 M7.3 0.7 L0.7 7.3" stroke="#555" stroke-width="1.1"/></svg>
<div style="left:544.30px;top:169.30px;line-height:10.4px;font-size:8px;color:#555;transform:scaleX(0.7125);transform-origin:0 50%;--w:132.70px;">レポートに追加するフィールドを選択してください:</div>
<div style="left:711.00px;top:167.00px;width:26.00px;height:15.50px;background:#fff;border:1px solid #d4d4d4;box-sizing:border-box;"></div>
<svg style="position:absolute;left:715px;top:169.5px;" width="12" height="11" viewBox="0 0 12 11"><circle cx="6" cy="5.5" r="2" fill="none" stroke="#555"/><path d="M6 0.8 L7.2 2.3 L9.3 1.8 L9.6 3.8 L11.2 5.5 L9.6 7.2 L9.3 9.2 L7.2 8.7 L6 10.2 L4.8 8.7 L2.7 9.2 L2.4 7.2 L0.8 5.5 L2.4 3.8 L2.7 1.8 L4.8 2.3Z" fill="none" stroke="#555" stroke-width="0.9"/></svg>
<svg style="position:absolute;left:729.5px;top:174px;" width="5" height="3" viewBox="0 0 5 3"><path d="M0 0 H5 L2.5 2.8Z" fill="#555"/></svg>
<div style="left:544.00px;top:190.20px;width:194.00px;height:12.60px;background:#fff;border:1px solid #c8c8c8;box-sizing:border-box;"></div>
<div style="left:545.40px;top:190.15px;line-height:11.7px;font-size:9px;color:#777;transform:scaleX(0.7667);transform-origin:0 50%;--w:13.80px;">検索</div>
<svg style="position:absolute;left:726px;top:191.5px;" width="10" height="10" viewBox="0 0 10 10"><circle cx="6" cy="4" r="3.2" fill="none" stroke="#555" stroke-width="1"/><path d="M3.8 6.3 L0.8 9.3" stroke="#555" stroke-width="1.2"/></svg>
<div style="left:544.00px;top:213.75px;width:194.00px;height:67.75px;background:#fff;"></div>
<div style="left:545.00px;top:214.20px;width:8.00px;height:8.00px;background:#fff;border:1px solid #777;box-sizing:border-box;"></div>
<svg style="position:absolute;left:546px;top:215.2px;" width="6" height="6" viewBox="0 0 6 6"><path d="M0.6 3 L2.4 5 L5.6 0.8" fill="none" stroke="#333" stroke-width="1"/></svg>
<div style="left:556.50px;top:212.67px;line-height:11.05px;font-size:8.5px;color:#222;transform:scaleX(0.7500);transform-origin:0 50%;--w:13.50px;font-weight:bold;-webkit-text-stroke:0;">日付</div>
<div style="left:545.00px;top:225.60px;width:8.00px;height:8.00px;background:#fff;border:1px solid #777;box-sizing:border-box;"></div>
<div style="left:556.50px;top:224.07px;line-height:11.05px;font-size:8.5px;color:#222;transform:scaleX(0.7500);transform-origin:0 50%;--w:13.50px;">名前</div>
<div style="left:545.00px;top:237.00px;width:8.00px;height:8.00px;background:#fff;border:1px solid #777;box-sizing:border-box;"></div>
<svg style="position:absolute;left:546px;top:238px;" width="6" height="6" viewBox="0 0 6 6"><path d="M0.6 3 L2.4 5 L5.6 0.8" fill="none" stroke="#333" stroke-width="1"/></svg>
<div style="left:556.50px;top:235.47px;line-height:11.05px;font-size:8.5px;color:#222;transform:scaleX(0.7500);transform-origin:0 50%;--w:13.50px;font-weight:bold;-webkit-text-stroke:0;">評価</div>
<div style="left:545.40px;top:251.78px;line-height:11.05px;font-size:8.5px;color:#444;transform:scaleX(0.6777);transform-origin:0 50%;--w:53.60px;">その他のテーブル...</div>
<div style="left:544.00px;top:292.00px;width:194.00px;height:1.00px;border-top:1px dotted #c8c8c8;box-sizing:border-box;"></div>
<div style="left:545.70px;top:294.50px;line-height:10.4px;font-size:8px;color:#555;transform:scaleX(0.6760);transform-origin:0 50%;--w:131.30px;">次のボックス間でフィールドをドラッグしてください:</div>
<svg style="position:absolute;left:547.5px;top:315.5px;" width="8" height="7" viewBox="0 0 8 7"><path d="M0.3 0.3 H7.7 L4.8 3.5 V6.8 L3.2 5.8 V3.5Z" fill="#666"/></svg>
<div style="left:559.00px;top:313.88px;line-height:11.05px;font-size:8.5px;color:#444;transform:scaleX(0.5778);transform-origin:0 50%;--w:26.00px;">フィルター</div>
<svg style="position:absolute;left:645.6px;top:316.6px;" width="6" height="5" viewBox="0 0 6 5"><rect x="0" y="0" width="6" height="5" fill="#cfcfcf"/><rect x="0" y="0" width="1.3" height="5" fill="#aaa"/><rect x="4.7" y="0" width="1.3" height="5" fill="#aaa"/></svg>
<div style="left:656.70px;top:313.98px;line-height:11.05px;font-size:8.5px;color:#444;transform:scaleX(0.7333);transform-origin:0 50%;--w:6.60px;">列</div>
<div style="left:545.70px;top:327.00px;width:92.00px;height:29.00px;background:#fff;"></div>
<div style="left:642.60px;top:327.00px;width:95.00px;height:29.00px;background:#fff;"></div>
<div style="left:643.80px;top:328.80px;width:93.00px;height:11.50px;background:#fff;border:1px solid #c6c6c6;box-sizing:border-box;"></div>
<div style="left:647.60px;top:328.75px;line-height:11.7px;font-size:9px;color:#333;transform:scaleX(0.8222);transform-origin:0 50%;--w:14.80px;">評価</div>
<svg style="position:absolute;left:726.5px;top:333.5px;" width="5" height="3" viewBox="0 0 5 3"><path d="M0 0 H5 L2.5 2.8Z" fill="#555"/></svg>
<div style="left:641.00px;top:314.00px;width:1.00px;height:92.00px;background:#d4d4d4;"></div>
<div style="left:545.00px;top:358.50px;width:193.00px;height:1.50px;background:#d6d6d6;"></div>
<svg style="position:absolute;left:548px;top:366.5px;" width="6" height="5" viewBox="0 0 6 5"><rect x="0" y="0" width="6" height="5" fill="#cfcfcf"/><rect x="0" y="0" width="6" height="1.3" fill="#aaa"/><rect x="0" y="3.7" width="6" height="1.3" fill="#aaa"/></svg>
<div style="left:558.50px;top:363.88px;line-height:11.05px;font-size:8.5px;color:#444;transform:scaleX(0.8333);transform-origin:0 50%;--w:7.50px;">行</div>
<div style="left:646.20px;top:362.48px;line-height:11.05px;font-size:8.5px;color:#888;transform:scaleX(1.0445);transform-origin:0 50%;--w:5.50px;">Σ</div>
<div style="left:656.70px;top:363.08px;line-height:11.05px;font-size:8.5px;color:#444;transform:scaleX(0.7889);transform-origin:0 50%;--w:7.10px;">値</div>
<div style="left:545.70px;top:377.90px;width:92.00px;height:28.80px;background:#fff;"></div>
<div style="left:642.60px;top:377.90px;width:95.00px;height:28.80px;background:#fff;"></div>
<div style="left:545.90px;top:377.60px;width:90.60px;height:12.00px;background:#fff;border:1px solid #c6c6c6;box-sizing:border-box;"></div>
<div style="left:550.40px;top:378.05px;line-height:11.7px;font-size:9px;color:#333;transform:scaleX(0.7833);transform-origin:0 50%;--w:14.10px;">日付</div>
<svg style="position:absolute;left:626px;top:383px;" width="5" height="3" viewBox="0 0 5 3"><path d="M0 0 H5 L2.5 2.8Z" fill="#555"/></svg>
<div style="left:644.50px;top:378.00px;width:93.00px;height:12.00px;background:#86bf9b;"></div>
<div style="left:647.60px;top:378.15px;line-height:11.7px;font-size:9px;color:#2a4a36;transform:scaleX(0.8365);transform-origin:0 50%;--w:36.40px;">合計 / 評価</div>
<svg style="position:absolute;left:726.5px;top:383px;" width="5" height="3" viewBox="0 0 5 3"><path d="M0 0 H5 L2.5 2.8Z" fill="#333"/></svg>
<div style="left:545.50px;top:421.80px;width:8.00px;height:7.60px;background:#fff;border:1px solid #a8a8a8;box-sizing:border-box;"></div>
<div style="left:557.30px;top:419.78px;line-height:11.05px;font-size:8.5px;color:#333;transform:scaleX(0.6726);transform-origin:0 50%;--w:78.70px;">レイアウトの更新を保留する</div>
<div style="left:10.00px;top:30.00px;width:1.00px;height:421.00px;background:#e9f1eb;"></div>
<div style="left:745.00px;top:30.00px;width:1.00px;height:421.00px;background:#e9f1eb;"></div>
<div style="left:10.00px;top:450.00px;width:736.00px;height:1.00px;background:#e9f1eb;"></div>
<div style="left:9.00px;top:10.00px;width:1.00px;height:442.00px;background:rgba(0,10,30,.45);"></div>
<div style="left:746.00px;top:10.00px;width:1.00px;height:442.00px;background:rgba(0,10,30,.45);"></div>
<div style="left:10.00px;top:451.00px;width:736.00px;height:1.00px;background:rgba(0,10,30,.45);"></div>
<div style="left:643.90px;top:390.60px;width:106.10px;height:142.60px;background:#fff;border:1px solid #c6c6c6;box-sizing:border-box;box-shadow:1px 1px 2px rgba(0,0,0,.35);"></div>
<div style="left:663.70px;top:445.80px;width:85.00px;height:1.00px;background:#e1e1e1;"></div>
<div style="left:663.70px;top:502.70px;width:85.00px;height:1.00px;background:#e1e1e1;"></div>
<div style="left:645.00px;top:519.40px;width:103.50px;height:13.00px;background:#d5eddf;border:1px solid #bfe0cc;box-sizing:border-box;"></div>
<div style="left:664.00px;top:392.88px;line-height:11.05px;font-size:8.5px;color:#b4b4b4;transform:scaleX(0.8154);transform-origin:0 50%;--w:39.00px;">上へ移動(<u>U</u>)</div>
<div style="left:664.00px;top:406.38px;line-height:11.05px;font-size:8.5px;color:#b4b4b4;transform:scaleX(0.8154);transform-origin:0 50%;--w:39.00px;">下へ移動(<u>D</u>)</div>
<div style="left:664.00px;top:420.28px;line-height:11.05px;font-size:8.5px;color:#b4b4b4;transform:scaleX(0.8026);transform-origin:0 50%;--w:46.00px;">先頭へ移動(<u>G</u>)</div>
<div style="left:664.00px;top:433.98px;line-height:11.05px;font-size:8.5px;color:#b4b4b4;transform:scaleX(0.8162);transform-origin:0 50%;--w:46.00px;">末尾へ移動(<u>E</u>)</div>
<div style="left:664.00px;top:448.38px;line-height:11.05px;font-size:8.5px;color:#333;transform:scaleX(0.6342);transform-origin:0 50%;--w:70.00px;">レポート フィルターに移動</div>
<div style="left:664.00px;top:462.08px;line-height:11.05px;font-size:8.5px;color:#333;transform:scaleX(0.6984);transform-origin:0 50%;--w:44.00px;">行ラベルに移動</div>
<div style="left:664.00px;top:475.78px;line-height:11.05px;font-size:8.5px;color:#333;transform:scaleX(0.6984);transform-origin:0 50%;--w:44.00px;">列ラベルに移動</div>
<div style="left:664.00px;top:489.68px;line-height:11.05px;font-size:8.5px;color:#b4b4b4;transform:scaleX(0.7222);transform-origin:0 50%;--w:26.00px;">値に移動</div>
<div style="left:664.00px;top:505.08px;line-height:11.05px;font-size:8.5px;color:#333;transform:scaleX(0.6458);transform-origin:0 50%;--w:46.50px;">フィールドの削除</div>
<div style="left:664.00px;top:520.18px;line-height:11.05px;font-size:8.5px;color:#333;transform:scaleX(0.7167);transform-origin:0 50%;--w:71.60px;">値フィールドの設定(<u>N</u>)...</div>
<svg style="position:absolute;left:647px;top:450.5px;" width="8" height="7" viewBox="0 0 8 7"><path d="M0.3 0.3 H7.7 L4.8 3.5 V6.8 L3.2 5.8 V3.5Z" fill="#555"/></svg>
<svg style="position:absolute;left:648px;top:464.5px;" width="6" height="7" viewBox="0 0 6 7"><rect x="0" y="0" width="6" height="7" fill="#c8c8c8"/><rect x="0" y="0" width="1.5" height="7" fill="#999"/><rect x="4.5" y="0" width="1.5" height="7" fill="#999"/></svg>
<svg style="position:absolute;left:647.5px;top:478px;" width="7" height="6" viewBox="0 0 7 6"><rect x="0" y="0" width="7" height="6" fill="#c8c8c8"/><rect x="0" y="0" width="7" height="1.5" fill="#999"/><rect x="0" y="4.5" width="7" height="1.5" fill="#999"/></svg>
<div style="left:648.50px;top:489.32px;line-height:12.35px;font-size:9.5px;color:#bbb;transform:scaleX(1.0213);transform-origin:0 50%;--w:6.00px;">Σ</div>
<svg style="position:absolute;left:646px;top:505.5px;" width="10" height="10" viewBox="0 0 10 10"><path d="M0.8 0.8 L9.2 9.2 M9.2 0.8 L0.8 9.2" stroke="#444" stroke-width="1.4"/></svg>
<svg style="position:absolute;left:646.5px;top:520px;" width="12" height="12" viewBox="0 0 12 12"><rect x="0.5" y="0.5" width="7" height="9" fill="#fff" stroke="#777"/><path d="M0.5 3 H7.5" stroke="#777"/><circle cx="8" cy="8" r="3.5" fill="#2e6fc0"/><rect x="7.5" y="7" width="1" height="3" fill="#fff"/><rect x="7.5" y="5.5" width="1" height="1" fill="#fff"/></svg>
</div>
<script>
(function(){var els=document.querySelectorAll("#d div"),L=[],i,e,w;for(i=0;i<els.length;i++){e=els[i];w=parseFloat(e.style.getPropertyValue("--w"));if(w>0){L.push([e,w]);e.style.transform="none";}}var N=[];for(i=0;i<L.length;i++){N.push(L[i][0].getBoundingClientRect().width);}for(i=0;i<L.length;i++){if(N[i]>0){L[i][0].style.transform="scaleX("+(L[i][1]/N[i]).toFixed(4)+")";}}})();
</script>
</body></html>
